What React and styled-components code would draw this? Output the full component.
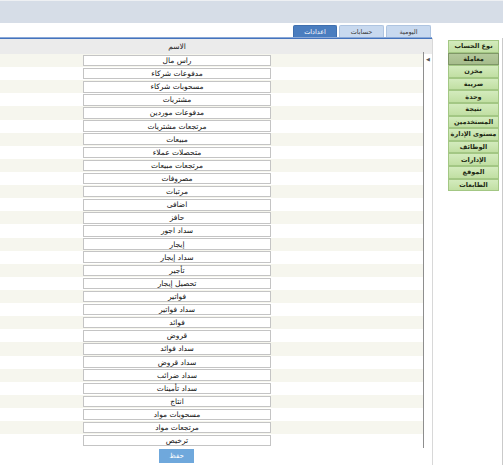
import React from "react";
import styled, { createGlobalStyle } from "styled-components";

const GlobalStyle = createGlobalStyle`
    body {
        margin: 0;
        font-family: "DejaVu Sans", "Noto Sans", sans-serif;
        background: #ffffff;
        overflow: hidden;
    }
`;

const Page = styled.div`
    width: 503px;
    height: 465px;
    background: #ffffff;
    overflow: hidden;
`;

const TopBand = styled.div`
    height: 22px;
    background: #d6dde7;
    border-top: 1px solid #eef0f3;
`;

const Body = styled.div`
    display: flex;
    height: 442px;
`;

const Main = styled.div`
    width: 432px;
    display: flex;
    flex-direction: column;
`;

const TabRow = styled.div`
    display: flex;
    justify-content: flex-end;
    gap: 2px;
    padding: 2px 1px 0 0;
    height: 12px;
`;

const Tab = styled.div`
    width: ${(p) => p.$w}px;
    height: 12px;
    box-sizing: border-box;
    border: 1px solid ${(p) => (p.$active ? "#3f6fae" : "#aec4e0")};
    border-bottom: none;
    border-radius: 2px 2px 0 0;
    background: ${(p) => (p.$active ? "#4a7dbf" : "#c8d9ef")};
    color: ${(p) => (p.$active ? "#ffffff" : "#3a3a3a")};
    font-size: 6.5px;
    display: flex;
    align-items: center;
    justify-content: center;
    direction: rtl;
`;

const BlueRule = styled.div`
    height: 2px;
    box-sizing: border-box;
    border-top: 1px solid #8aa9d8;
    border-bottom: 1px solid #4473bd;
`;

const Grid = styled.div`
    display: grid;
    grid-template-columns: 83px 188px 1fr;
    align-items: center;
`;

const Header = styled(Grid)`
    height: 15px;
    background: #ebebeb;
    font-size: 7.5px;
    color: #222;
`;

const HeaderCell = styled.div`
    grid-column: 2;
    text-align: center;
    direction: rtl;
`;

const TableArea = styled.div`
    display: flex;
`;

const Rows = styled.div`
    width: 423px;
    display: flex;
    flex-direction: column;
`;

const Row = styled(Grid)`
    height: 13.12px;
    background: ${(p) => (p.$odd ? "#f6f6ee" : "#ffffff")};
`;

const Cell = styled.div`
    grid-column: 2;
    height: 11.5px;
    box-sizing: border-box;
    border: 1px solid #c4c4c4;
    background: #ffffff;
    font-size: 7.5px;
    color: #111;
    display: flex;
    align-items: center;
    justify-content: center;
    direction: rtl;
`;

const ButtonRow = styled(Grid)`
    padding-top: 1.5px;
`;

const SaveButton = styled.div`
    grid-column: 2;
    justify-self: center;
    margin-left: -1px;
    width: 35px;
    height: 14px;
    background: #6fa8dc;
    color: #ffffff;
    font-size: 7px;
    display: flex;
    align-items: center;
    justify-content: center;
    direction: rtl;
`;

const ScrollCol = styled.div`
    width: 9px;
    height: 396px;
    margin-top: -2px;
    box-sizing: border-box;
    border-left: 1.5px solid #8e8e8e;
    position: relative;
`;

const Arrow = styled.span`
    position: absolute;
    top: 4px;
    left: 2px;
    font-size: 5px;
    color: #555;
`;

const Side = styled.div`
    width: 71px;
    margin-top: 15px;
    box-sizing: border-box;
    border-left: 1px solid #d8d8d8;
    border-right: 1px solid #cacaca;
    padding: 2px 3px 0 15px;
    display: flex;
    flex-direction: column;
`;

const SideButton = styled.div`
    height: 12.6px;
    box-sizing: border-box;
    border: 1px solid ${(p) => (p.$active ? "#7f9767" : "#a3c784")};
    background: ${(p) =>
        p.$active
            ? "linear-gradient(#b4c99c, #a6bc8c)"
            : "linear-gradient(#d3ebbd, #c1dfa3)"};
    color: #1e2a14;
    font-size: 6.5px;
    font-weight: bold;
    display: flex;
    align-items: center;
    justify-content: center;
    direction: rtl;
    white-space: nowrap;
`;

const tabs = [
    { label: "اعدادات", w: 44, active: true },
    { label: "حسابات", w: 45 },
    { label: "اليومية", w: 45 },
];

const names = [
    "راس مال",
    "مدفوعات شركاء",
    "مسحوبات شركاء",
    "مشتريات",
    "مدفوعات موردين",
    "مرتجعات مشتريات",
    "مبيعات",
    "متحصلات عملاء",
    "مرتجعات مبيعات",
    "مصروفات",
    "مرتبات",
    "اضافى",
    "حافز",
    "سداد اجور",
    "إيجار",
    "سداد إيجار",
    "تأجير",
    "تحصيل إيجار",
    "فواتير",
    "سداد فواتير",
    "فوائد",
    "قروض",
    "سداد فوائد",
    "سداد قروض",
    "سداد ضرائب",
    "سداد تأمينات",
    "انتاج",
    "مسحوبات مواد",
    "مرتجعات مواد",
    "ترخيص",
];

const sideItems = [
    "نوع الحساب",
    "معاملة",
    "مخزن",
    "ضريبة",
    "وحدة",
    "نتيجة",
    "المستخدمين",
    "مستوى الإدارة",
    "الوظائف",
    "الإدارات",
    "الموقع",
    "الطابعات",
];

const App = () => {
    return (
        <>
            <GlobalStyle />
            <Page>
                <TopBand />
                <Body>
                    <Main>
                        <TabRow>
                            {tabs.map((t) => (
                                <Tab key={t.label} $w={t.w} $active={t.active}>
                                    {t.label}
                                </Tab>
                            ))}
                        </TabRow>
                        <BlueRule />
                        <Header>
                            <HeaderCell>الاسم</HeaderCell>
                        </Header>
                        <TableArea>
                            <Rows>
                                {names.map((n, i) => (
                                    <Row key={n} $odd={i % 2 === 0}>
                                        <Cell>{n}</Cell>
                                    </Row>
                                ))}
                                <ButtonRow>
                                    <SaveButton>حفظ</SaveButton>
                                </ButtonRow>
                            </Rows>
                            <ScrollCol>
                                <Arrow>◀</Arrow>
                            </ScrollCol>
                        </TableArea>
                    </Main>
                    <Side>
                        {sideItems.map((s) => (
                            <SideButton key={s} $active={s === "معاملة"}>
                                {s}
                            </SideButton>
                        ))}
                    </Side>
                </Body>
            </Page>
        </>
    );
};

export default App;
